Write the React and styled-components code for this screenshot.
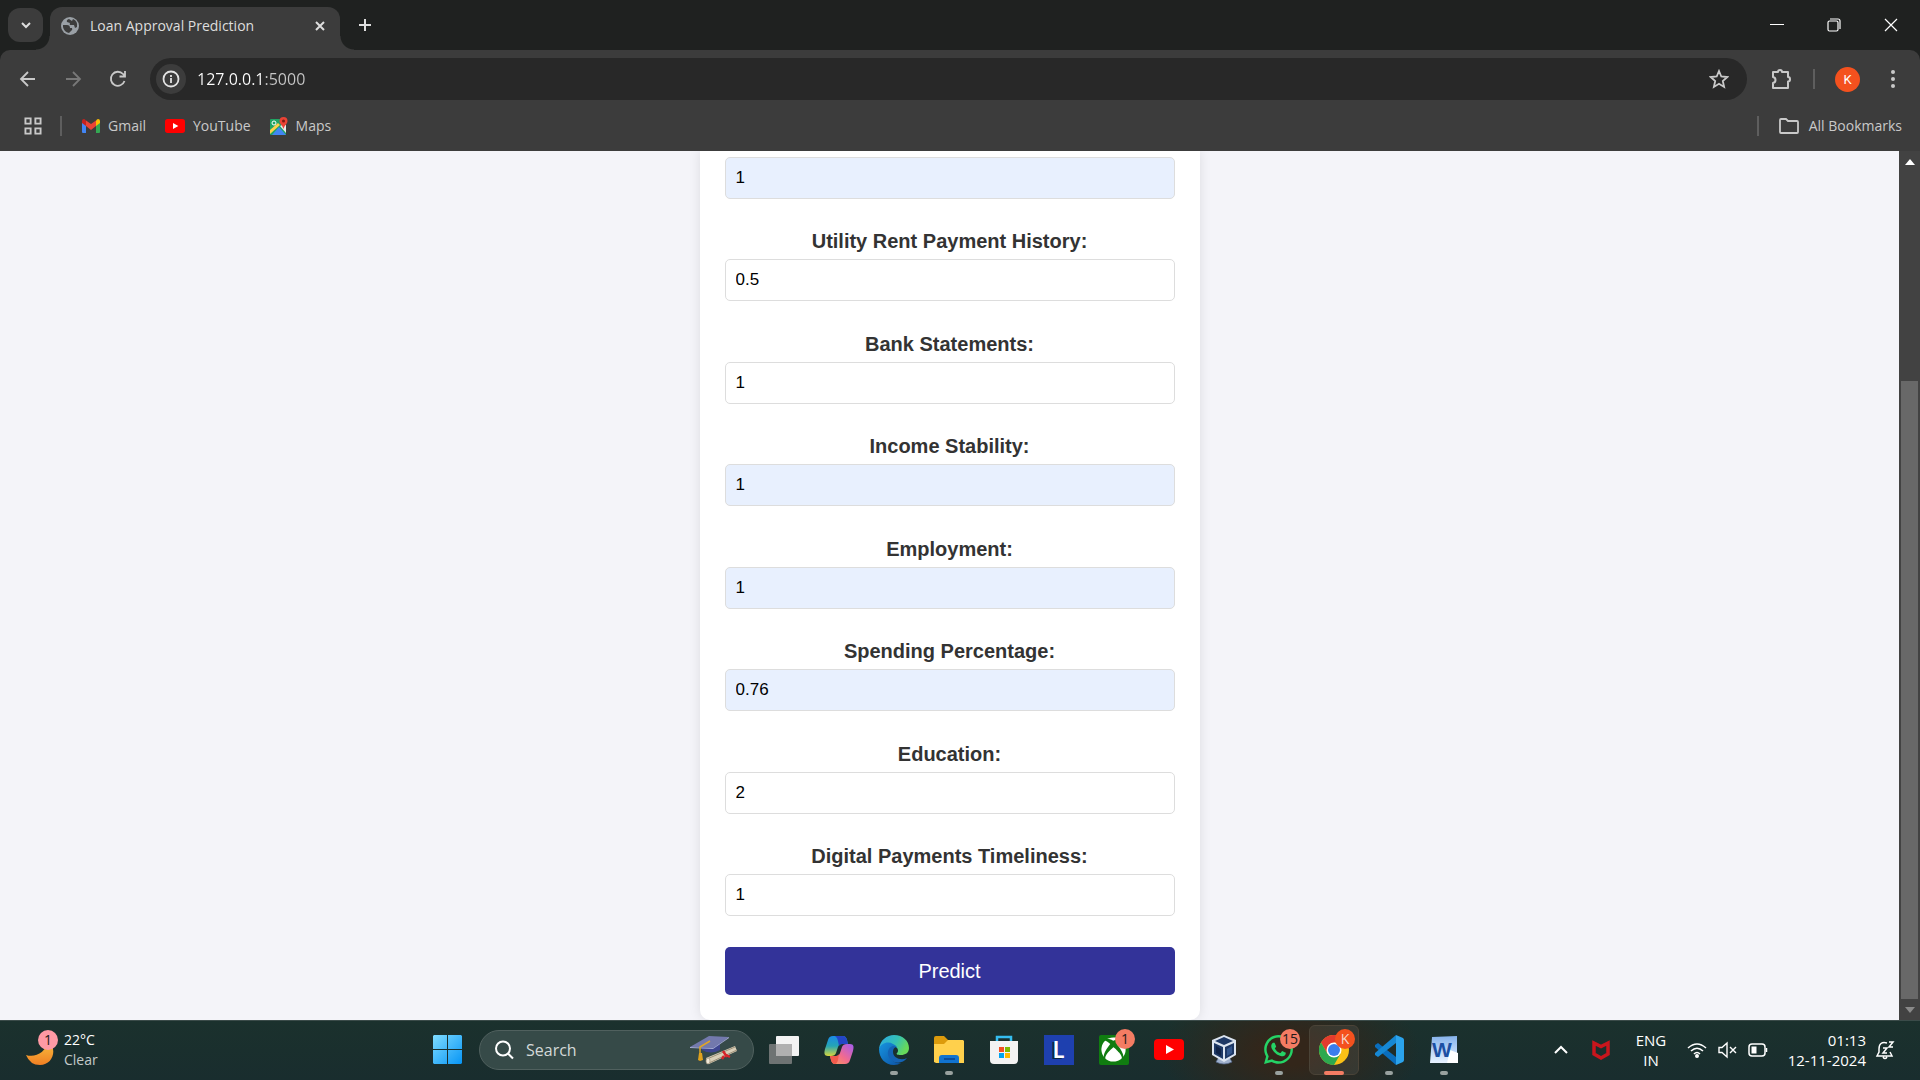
import React from "react";
import styled, { createGlobalStyle } from "styled-components";
import { FaXbox, FaWhatsapp } from "react-icons/fa6";

const ui = '"Open Sans", "Noto Sans", sans-serif';
const arial = '"Liberation Sans", Arial, sans-serif';

const GlobalStyle = createGlobalStyle`
  * { box-sizing: border-box; }
  body { margin: 0; font-family: ${ui}; background: #3c3c3c; }
  button { border: 0; padding: 0; background: none; color: inherit; font: inherit; }
  input { font: inherit; outline: none; }
  a { color: inherit; text-decoration: none; }
  svg { display: block; flex: none; }
`;

const Screen = styled.div`
  display: flex;
  flex-direction: column;
  height: 100vh;
  overflow: hidden;
`;

/* ---------- browser chrome ---------- */

const TabStrip = styled.header`
  display: flex;
  align-items: flex-start;
  flex: none;
  height: 50px;
  padding-left: 8px;
  background: #1f2120;
  color: #dedede;
`;

const TabSearch = styled.button`
  display: grid;
  place-items: center;
  width: 35px;
  height: 34px;
  margin-top: 8px;
  border-radius: 12px;
  background: #3c3c3c;
`;

const Tab = styled.div`
  position: relative;
  display: flex;
  align-items: center;
  width: 290px;
  height: 43px;
  margin: 7px 0 0 7px;
  padding: 0 12px 6px 11px;
  border-radius: 12px 12px 0 0;
  background: #3c3c3c;
  font-size: 14px;

  &::before,
  &::after {
    content: "";
    position: absolute;
    bottom: 0;
    width: 14px;
    height: 14px;
  }
  &::before {
    right: 100%;
    background: radial-gradient(circle at 0 0, transparent 13px, #3c3c3c 14px);
  }
  &::after {
    left: 100%;
    background: radial-gradient(circle at 100% 0, transparent 13px, #3c3c3c 14px);
  }
`;

const TabTitle = styled.span`
  flex: 1;
  margin-left: 11px;
  white-space: nowrap;
`;

const SmallButton = styled.button`
  display: grid;
  place-items: center;
  width: 16px;
  height: 24px;
`;

const NewTab = styled.button`
  display: grid;
  place-items: center;
  width: 50px;
  height: 50px;
`;

const WindowControls = styled.div`
  display: flex;
  margin-left: auto;
  padding-right: 1px;
`;

const WindowButton = styled.button`
  display: grid;
  place-items: center;
  width: 57px;
  height: 50px;
  color: #fff;
`;

const ToolbarBack = styled.div`
  flex: none;
  background: #1f2120;
`;

const Toolbar = styled.div`
  display: flex;
  align-items: center;
  height: 58px;
  padding: 0 5px;
  border-radius: 10px 10px 0 0;
  background: #3c3c3c;
  color: #c9c9c9;
`;

const ToolButton = styled.button`
  display: grid;
  place-items: center;
  width: 45px;
  height: 42px;
  color: ${(p) => (p.$dim ? "#787878" : "inherit")};
`;

const Omnibox = styled.div`
  display: flex;
  align-items: center;
  flex: 1;
  height: 42px;
  margin: 0 11px 0 10px;
  padding: 0 22px 0 6px;
  border-radius: 21px;
  background: #282828;
`;

const SiteInfo = styled.button`
  display: grid;
  place-items: center;
  width: 30px;
  height: 30px;
  border-radius: 50%;
  background: #3c3c3c;
  color: #e3e3e3;
`;

const Address = styled.input`
  flex: 1;
  min-width: 0;
  margin-left: 11px;
  padding: 0;
  border: 0;
  background: linear-gradient(90deg, #fff 66px, #c7c7c7 66px);
  background-clip: text;
  color: transparent;
  font-size: 16px;
  line-height: 24px;
`;

const Rule = styled.span`
  width: 2px;
  height: 20px;
  background: #5e5e5e;
  margin: 0 ${(p) => p.$gap}px;
`;

const Avatar = styled.span`
  display: grid;
  place-items: center;
  width: 25px;
  height: 25px;
  border-radius: 50%;
  background: #f4511e;
  color: #fff;
  font: 13px/25px Roboto, sans-serif;
`;

const Bookmarks = styled.nav`
  display: flex;
  align-items: center;
  flex: none;
  height: 43px;
  padding: 0 18px 8px 24px;
  background: #3c3c3c;
  color: #c9c9c9;
  font-size: 14px;
`;

const BookmarkList = styled.div`
  display: flex;
  flex: 1;
  gap: 19px;
`;

const Bookmark = styled.a`
  display: flex;
  align-items: center;
  gap: 8px;
  white-space: nowrap;
`;

const AllBookmarks = styled.button`
  display: flex;
  align-items: center;
  gap: 10px;
  white-space: nowrap;
`;

/* ---------- web page ---------- */

const Viewport = styled.div`
  display: flex;
  flex: 1;
  min-height: 0;
`;

const Page = styled.main`
  display: flex;
  justify-content: center;
  flex: 1;
  overflow: hidden;
  background: #f4f4f9;
  font-family: ${arial};
`;

const Card = styled.form`
  display: flex;
  flex-direction: column;
  width: 500px;
  padding: 6px 25px 25px;
  border-radius: 0 0 10px 10px;
  background: #fff;
  box-shadow: 0 0 12px rgba(0, 0, 0, 0.1);
`;

const Fields = styled.div`
  display: flex;
  flex-direction: column;
  justify-content: space-between;
  flex: 1;
  margin-bottom: 31px;
`;

const Field = styled.div`
  display: flex;
  flex-direction: column;
  gap: 6px;
`;

const Label = styled.label`
  color: #333;
  font-size: 20px;
  font-weight: bold;
  line-height: 23px;
  text-align: center;
`;

const TextInput = styled.input`
  width: 100%;
  height: 42px;
  padding: 0 10px;
  border: 1px solid #ddd;
  border-radius: 5px;
  background: ${(p) => (p.$filled ? "#e8f0fe" : "#fff")};
  color: #000;
  font-size: 17px;
`;

const Submit = styled.button`
  height: 48px;
  border-radius: 5px;
  background: #333399;
  color: #fff;
  font-size: 20px;
`;

const Scrollbar = styled.div`
  display: flex;
  flex-direction: column;
  width: 21px;
  background: #424242;
`;

const ScrollArrow = styled.button`
  display: grid;
  place-items: center;
  height: 21px;
  color: ${(p) => p.$color};
`;

const ScrollTrack = styled.div`
  flex: 209;
`;

const ScrollThumb = styled.div`
  flex: 618;
  margin: 0 2px;
  background: #686868;
`;

/* ---------- taskbar ---------- */

const Taskbar = styled.footer`
  display: flex;
  align-items: center;
  flex: none;
  height: 60px;
  padding-bottom: 2px;
  border-top: 1px solid #3b4b49;
  background:
    radial-gradient(ellipse 130px 70px at 1290px 30px, #33261a 20%, transparent 100%),
    linear-gradient(#1b312d, #192d2e);
  color: #fff;
  font-size: 14px;
  line-height: 20px;
`;

const Weather = styled.button`
  display: flex;
  align-items: center;
  flex: 0 0 420px;
  padding-left: 26px;
  text-align: left;
`;

const WeatherIcon = styled.span`
  position: relative;
  width: 38px;
  height: 40px;
`;

const WeatherText = styled.span`
  display: flex;
  flex-direction: column;
  small { font-size: 14px; color: #c3cac9; }
`;

const Badge = styled.span`
  position: absolute;
  top: ${(p) => p.$top}px;
  right: 6px;
  width: 20px;
  height: 20px;
  border-radius: 50%;
  background: ${(p) => p.$bg || "#f47c63"};
  color: ${(p) => p.$fg || "#24191a"};
  font-size: 14px;
  line-height: 20px;
  text-align: center;
`;

const TaskButton = styled.button`
  position: relative;
  display: grid;
  place-items: center;
  width: 55px;
  height: 50px;

  &::after {
    content: "";
    position: absolute;
    left: 50%;
    bottom: 0;
    width: ${(p) => (p.$state === "active" ? 20 : 8)}px;
    height: 4px;
    border-radius: 2px;
    transform: translateX(-50%);
    background: ${(p) => (p.$state === "active" ? "#f47c63" : p.$state === "open" ? "#99a19f" : "transparent")};
  }
`;

const ActiveTile = styled.span`
  display: grid;
  place-items: center;
  width: 50px;
  height: 50px;
  border: 1px solid #4a4337;
  border-radius: 6px;
  background: rgba(255, 255, 255, 0.07);
`;

const SearchBox = styled.label`
  display: flex;
  align-items: center;
  width: 275px;
  height: 40px;
  margin: 0 2px 0 4px;
  padding: 0 15px 0 14px;
  border: 1px solid #50605e;
  border-radius: 20px;
  background: #364a48;
  input {
    flex: 1;
    min-width: 0;
    margin-left: 12px;
    padding: 0;
    border: 0;
    background: none;
    color: #fff;
    font-size: 16px;
  }
  input::placeholder { color: #d3d9d8; opacity: 1; }
`;

const Tray = styled.div`
  display: flex;
  align-items: center;
  margin-left: auto;
  padding-right: 16px;
  font-size: 15px;
`;

const TrayButton = styled.button`
  display: grid;
  place-items: center;
  width: ${(p) => p.$w}px;
  height: 40px;
`;

const Lines = styled.button`
  display: flex;
  flex-direction: column;
  align-items: ${(p) => p.$align};
  width: ${(p) => p.$w}px;
  white-space: nowrap;
`;

/* ---------- icons ---------- */

const Line = ({ s = 20, w = 2, vb = 20, children }) => (
  <svg width={s} height={s} viewBox={`0 0 ${vb} ${vb}`} fill="none" stroke="currentColor" strokeWidth={w}>
    {children}
  </svg>
);

const Globe = () => (
  <svg width="18" height="18" viewBox="0 0 18 18">
    <circle cx="9" cy="9" r="9" fill="#9aa0a6" />
    <path d="M2 8h4q3 0 3 3h2q1 2-1 3l-2 2q-5-1-6-6z" fill="#3c3c3c" />
    <path d="M8 2q-3 1-2 3l3 1q-1 2 1 2h3l1 3 2-1q1-6-4-8l-1 2z" fill="#3c3c3c" />
  </svg>
);

const Gmail = () => (
  <svg width="18" height="14" viewBox="0 0 18 14">
    <path d="M0 2v11q0 1 1 1h3V5z" fill="#4285f4" />
    <path d="M18 2v11q0 1-1 1h-3V5z" fill="#34a853" />
    <path d="M14 1.500V7l4-3V2Q18 0 16 0q-1 0-2 1.500z" fill="#fbbc04" />
    <path d="M4 1.500V7L0 4V2Q0 0 2 0q1 0 2 1.500z" fill="#c5221f" />
    <path d="M4 1.500L9 5l5-3.500V7L9 11 4 7z" fill="#ea4335" />
  </svg>
);

const YouTube = ({ w, h }) => (
  <svg width={w} height={h} viewBox="0 0 30 21" preserveAspectRatio="none">
    <rect width="30" height="21" rx="4" fill="#f00" />
    <path d="M12 6l8 4.500-8 4.500z" fill="#fff" />
  </svg>
);

const Maps = () => (
  <svg width="18" height="18" viewBox="0 0 18 18">
    <rect y="2" width="16" height="16" rx="1" fill="#1fa463" />
    <path d="M10 8L0 17v-4l8-7z" fill="#ffd04b" />
    <path d="M10 9l6 7V8h-4z" fill="#e8eaed" />
    <path d="M9 10l7 8H2z" fill="#4285f4" />
    <circle cx="4" cy="6" r="2" fill="none" stroke="#fff" />
    <path d="M13.500 0a4 4 0 014 4c0 3-3 4-4 8-1-4-4-5-4-8a4 4 0 014-4z" fill="#ea4335" />
    <circle cx="13.500" cy="4" r="1.500" fill="#7b1b12" />
  </svg>
);

const Moon = () => (
  <svg width="28" height="40" viewBox="0 0 28 40">
    <defs><linearGradient id="moon" x2="0" y2="1"><stop stopColor="#f9c440" /><stop offset="1" stopColor="#f07f23" /></linearGradient></defs>
    <path d="M0 25c9 3 20-2 22-15 10 9 5 25-8 25Q4 35 0 25z" fill="url(#moon)" />
  </svg>
);

const Windows = () => (
  <svg width="29" height="29" viewBox="0 0 29 29">
    <defs><linearGradient id="win" x2="1" y2="1"><stop stopColor="#7fdcff" /><stop offset="1" stopColor="#0795f5" /></linearGradient></defs>
    <path d="M1 0h13v14H0V1zM15 0h13l1 1v13H15zM0 15h14v14H1l-1-1zM15 15h14v13l-1 1H15z" fill="url(#win)" />
  </svg>
);

const GradCap = () => (
  <svg width="48" height="30" viewBox="0 0 48 30">
    <path d="M12 8v7q9 5 18 0V6z" fill="#3d4590" />
    <path d="M0 12L19 1l20 1-16 11z" fill="#7379ad" />
    <path d="M0 12l23 1 16-11v1L23 14 0 13z" fill="#a5abd3" />
    <path d="M20 6L10 12v8" fill="none" stroke="#e1a526" strokeWidth="1.500" />
    <path d="M9 18h3l1 7-3 1-2-1z" fill="#e0a21d" />
    <path d="M16 23l29-12 2 5-28 13z" fill="#d9cfb8" />
    <path d="M17 24l28-12M19 28l28-13" stroke="#9d9079" strokeWidth="1" />
    <ellipse cx="18" cy="26" rx="2" ry="3" fill="#f1ead9" stroke="#a0937b" strokeWidth=".7" />
    <path d="M33 16l4 6M34 21l-2 3M36 20l4 2" stroke="#d8232a" strokeWidth="2.500" />
  </svg>
);

const TaskView = () => (
  <svg width="30" height="28" viewBox="0 0 30 28">
    <rect x="7" width="23" height="20" rx="1" fill="#f3f3f3" />
    <rect y="8" width="23" height="20" rx="1" fill="#6e7373" />
    <path d="M7 8h16v12H7z" fill="#b0b0b0" />
  </svg>
);

const Copilot = () => (
  <svg width="30" height="28" viewBox="0 0 30 28">
    <defs>
      <linearGradient id="cpa" x2="0" y2="1"><stop stopColor="#1b8be8" /><stop offset=".5" stopColor="#25a5b5" /><stop offset="1" stopColor="#d6d63c" /></linearGradient>
      <linearGradient id="cpb" x1="1" x2="0" y2="1"><stop stopColor="#a35cf0" /><stop offset=".55" stopColor="#f26b8e" /><stop offset="1" stopColor="#fba057" /></linearGradient>
    </defs>
    <path d="M7 20H4c-4 0-4-3-3-7L4 4q1-4 5-4h10q3 0 4 4l1 4h-6q-3 0-4 3l-2 6q-1 3-5 3z" fill="url(#cpa)" />
    <path d="M14 0h5q3 0 4 4l1 4h-6q-2 0-3 2l-1-5q0-3-3-5z" fill="#2446c6" />
    <path d="M23 8h3c4 0 4 3 3 7l-3 9q-1 4-5 4H11q-3 0-4-4l-1-4h6q3 0 4-3l2-6q1-3 5-3z" fill="url(#cpb)" />
    <path d="M6 20h6q2 0 3-2l-1 6q-1 4-3 4-3 0-4-4z" fill="#f25b4d" />
  </svg>
);

const Edge = () => (
  <svg width="30" height="30" viewBox="0 0 30 30">
    <defs>
      <linearGradient id="eg1" x2="1" y2=".4"><stop stopColor="#2aa7e8" /><stop offset=".6" stopColor="#35c1b4" /><stop offset="1" stopColor="#67d95a" /></linearGradient>
      <linearGradient id="eg2" x2="1" y2="1"><stop stopColor="#1794e0" /><stop offset="1" stopColor="#0c52a4" /></linearGradient>
    </defs>
    <path d="M0 14C1 5 8 0 15 0c9 0 15 6 15 13 0 5-4 7-8 7-4 0-5-1-4-2 2-2 1-6-3-7-5-2-12-2-15 3z" fill="url(#eg1)" />
    <path d="M0 14c2-6 9-8 14-5 3 1 4 3 4 4-4-3-8 0-8 5 0 6 5 11 12 10-2 1-4 2-7 2C6 30 0 23 0 14z" fill="url(#eg2)" />
    <path d="M14 11c-5 1-7 8-3 13 4 5 13 5 17-1-6 3-14 0-14-6 0-3 1-4 3-5z" fill="#1463b5" />
  </svg>
);

const Folder = () => (
  <svg width="30" height="27" viewBox="0 0 30 27">
    <path d="M0 2q0-2 2-2h8l4 4h15v10H0z" fill="#dc9b0c" />
    <path d="M0 8h10l4-4h15l1 1v22H2l-2-1z" fill="#ffd04c" />
    <path d="M5 27v-5q0-3 3-3h14q3 0 3 3v5z" fill="#1173cf" />
    <path d="M10 22h11v2H10z" fill="#0a4d9c" />
  </svg>
);

const Store = () => (
  <svg width="30" height="30" viewBox="0 0 30 30">
    <path d="M8 7V2h14v5" fill="none" stroke="#35bdf0" strokeWidth="2.500" />
    <path d="M1 6h28v19q0 4-4 4H5q-4 0-4-4z" fill="#f3f3f3" />
    <path d="M10 12h5v5h-5z" fill="#f25022" /><path d="M16 12h5v5h-5z" fill="#7fba00" />
    <path d="M10 18h5v5h-5z" fill="#00a4ef" /><path d="M16 18h5v5h-5z" fill="#ffb900" />
  </svg>
);

const LTile = styled.span`
  width: 30px;
  height: 30px;
  background: #1e40af;
  color: #fff;
  font: bold 22px/29px Lato, sans-serif;
  text-shadow: -2px 1px 0 #0c2746;
`;

const XboxTile = styled.span`
  display: grid;
  place-items: center;
  width: 30px;
  height: 30px;
  border-radius: 2px;
  background: #107c10;
`;

const VBox = () => (
  <svg width="26" height="30" viewBox="0 0 26 30">
    <path d="M8 22h10l3 5q-8 4-16 0z" fill="#9fb0cc" stroke="#546a8f" strokeWidth=".7" />
    <path d="M13 0l12 5v15l-12 7-12-7V5z" fill="#dbe4f0" />
    <path d="M13 2l9 4-9 4-9-4zM3 8l9 4v12l-9-5zM23 8l-9 4v12l9-5z" fill="#1d3865" />
    <path d="M5 11l5 3v7l-5-3z" fill="#0f2348" /><path d="M21 11l-5 3v7l5-3z" fill="#32558c" />
  </svg>
);

const Chrome = () => (
  <svg width="30" height="30" viewBox="0 0 30 30">
    <circle cx="15" cy="15" r="15" fill="#fbc116" />
    <path d="M2 7.500A15 15 0 0128 7.500H15L8.500 18.800z" fill="#e33b2e" />
    <path d="M2 7.500A15 15 0 0015 30l6.500-11.300L8.500 18.800z" fill="#2da94f" />
    <circle cx="15" cy="15" r="7.500" fill="#fff" /><circle cx="15" cy="15" r="6" fill="#3b7ded" />
  </svg>
);

const VSCode = () => (
  <svg width="30" height="30" viewBox="0 0 30 30">
    <path d="M1 10l3-2 18 14v8L1 12z" fill="#0a6ebd" />
    <path d="M1 20l3 2L22 8V0L1 18z" fill="#1688d4" />
    <path d="M22 0l7 3q1 1 1 2v20q0 1-1 2l-7 3z" fill="#2ba3ec" />
  </svg>
);

const Word = () => (
  <svg width="28" height="28" viewBox="0 0 28 28">
    <defs><linearGradient id="wd" x2="0" y2="1"><stop stopColor="#86b3ec" /><stop offset="1" stopColor="#e8f2ff" /></linearGradient></defs>
    <path d="M2 1L27 0v27H0z" fill="url(#wd)" />
    <path d="M20 14l8 3v10H17z" fill="#fff" />
    <text x="2" y="21" fontFamily="Liberation Sans, sans-serif" fontWeight="bold" fontSize="21" fill="#1c4fa3">W</text>
  </svg>
);

const fields = [
  { id: "previous", value: "1", filled: true },
  { id: "utility", label: "Utility Rent Payment History:", value: "0.5" },
  { id: "bank", label: "Bank Statements:", value: "1" },
  { id: "income", label: "Income Stability:", value: "1", filled: true },
  { id: "employment", label: "Employment:", value: "1", filled: true },
  { id: "spending", label: "Spending Percentage:", value: "0.76", filled: true },
  { id: "education", label: "Education:", value: "2" },
  { id: "digital", label: "Digital Payments Timeliness:", value: "1" },
];

function Browser() {
  return (
    <>
      <TabStrip>
        <TabSearch aria-label="Search tabs"><Line s={12} vb={12}><path d="M2 4l4 4 4-4" /></Line></TabSearch>
        <Tab>
          <Globe />
          <TabTitle>Loan Approval Prediction</TabTitle>
          <SmallButton aria-label="Close tab"><Line s={12} vb={12}><path d="M2 2l8 8M10 2l-8 8" /></Line></SmallButton>
        </Tab>
        <NewTab aria-label="New tab"><Line s={14} vb={14}><path d="M7 1v12M1 7h12" /></Line></NewTab>
        <WindowControls>
          <WindowButton aria-label="Minimize"><Line s={14} vb={14} w={1}><path d="M0 6.500h14" /></Line></WindowButton>
          <WindowButton aria-label="Restore">
            <Line s={14} vb={14} w={1.2}><rect x="1" y="3" width="10" height="10" rx="1.500" /><path d="M3 1h8q2 0 2 2v8" /></Line>
          </WindowButton>
          <WindowButton aria-label="Close"><Line s={14} vb={14} w={1.2}><path d="M1 1l12 12M13 1L1 13" /></Line></WindowButton>
        </WindowControls>
      </TabStrip>
      <ToolbarBack>
        <Toolbar>
          <ToolButton aria-label="Back"><Line w={1.8}><path d="M17 10H4M10 3l-7 7 7 7" /></Line></ToolButton>
          <ToolButton aria-label="Forward" $dim><Line w={1.8}><path d="M3 10h13M10 3l7 7-7 7" /></Line></ToolButton>
          <ToolButton aria-label="Reload"><Line w={1.8}><path d="M16.500 12A7 7 0 1115 5l2 2M17 2v5.500h-5.500" /></Line></ToolButton>
          <Omnibox>
            <SiteInfo aria-label="Site information">
              <Line s={18} vb={18} w={1.8}><circle cx="9" cy="9" r="7.500" /><path d="M9 8v5M9 5v2" /></Line>
            </SiteInfo>
            <Address aria-label="Address" defaultValue="127.0.0.1:5000" />
            <SmallButton aria-label="Bookmark this page">
              <Line s={20} w={1.8}><path d="M10 2l2.300 5.500 6 .5-4.500 4 1.300 5.900L10 14.800 4.900 17.900 6.200 12 1.700 8l6-.5z" /></Line>
            </SmallButton>
          </Omnibox>
          <ToolButton aria-label="Extensions">
            <Line s={22} vb={22}><path d="M3 4h5q0-2 2-2t2 2h6v5q2 0 2 2.200t-2 2.200V20H3v-5q2.500-.5 2.500-3T3 9z" strokeLinejoin="round" /></Line>
          </ToolButton>
          <Rule $gap={10} />
          <ToolButton aria-label="Profile"><Avatar>K</Avatar></ToolButton>
          <ToolButton aria-label="Menu">
            <svg width="4" height="18" viewBox="0 0 4 18" fill="currentColor"><circle cx="2" cy="2" r="2" /><circle cx="2" cy="9" r="2" /><circle cx="2" cy="16" r="2" /></svg>
          </ToolButton>
        </Toolbar>
      </ToolbarBack>
      <Bookmarks>
        <SmallButton aria-label="Apps">
          <Line s={18} vb={19} w={2}><path d="M1.500 1.500h5.500v5.500H1.500zM12 1.500h5.500v5.500H12zM1.500 12h5.500v5.500H1.500zM12 12h5.500v5.500H12z" /></Line>
        </SmallButton>
        <Rule $gap={20} />
        <BookmarkList>
          <Bookmark href="#gmail"><Gmail />Gmail</Bookmark>
          <Bookmark href="#youtube"><YouTube w={20} h={14} />YouTube</Bookmark>
          <Bookmark href="#maps"><Maps />Maps</Bookmark>
        </BookmarkList>
        <Rule $gap={20} />
        <AllBookmarks>
          <Line s={20} w={1.8}><path d="M1 4q0-1 1-1h5l2 2h9q1 0 1 1v10q0 1-1 1H2q-1 0-1-1z" /></Line>
          All Bookmarks
        </AllBookmarks>
      </Bookmarks>
    </>
  );
}

function LoanForm() {
  return (
    <Card onSubmit={(e) => e.preventDefault()}>
      <Fields>
        {fields.map((f) => (
          <Field key={f.id}>
            {f.label && <Label htmlFor={f.id}>{f.label}</Label>}
            <TextInput id={f.id} defaultValue={f.value} $filled={f.filled} aria-label={f.label ? undefined : "Value"} />
          </Field>
        ))}
      </Fields>
      <Submit type="submit">Predict</Submit>
    </Card>
  );
}

function SystemBar() {
  return (
    <Taskbar>
      <Weather>
        <WeatherIcon><Moon /><Badge $top={0} $bg="#ff99a4">1</Badge></WeatherIcon>
        <WeatherText><span>22°C</span><small>Clear</small></WeatherText>
      </Weather>
      <TaskButton aria-label="Start"><Windows /></TaskButton>
      <SearchBox>
        <Line s={20}><circle cx="9" cy="8.500" r="7" /><path d="M14 13.500l5 5" /></Line>
        <input aria-label="Search" placeholder="Search" />
        <GradCap />
      </SearchBox>
      <TaskButton aria-label="Task view"><TaskView /></TaskButton>
      <TaskButton aria-label="Copilot"><Copilot /></TaskButton>
      <TaskButton aria-label="Edge" $state="open"><Edge /></TaskButton>
      <TaskButton aria-label="File Explorer" $state="open"><Folder /></TaskButton>
      <TaskButton aria-label="Store"><Store /></TaskButton>
      <TaskButton><LTile>L</LTile></TaskButton>
      <TaskButton aria-label="Xbox">
        <XboxTile><FaXbox size={25} /></XboxTile>
        <Badge $top={4}>1</Badge>
      </TaskButton>
      <TaskButton aria-label="YouTube"><YouTube w={30} h={21} /></TaskButton>
      <TaskButton aria-label="VirtualBox"><VBox /></TaskButton>
      <TaskButton aria-label="WhatsApp" $state="open">
        <FaWhatsapp size={33} color="#25d366" />
        <Badge $top={4}>15</Badge>
      </TaskButton>
      <TaskButton aria-label="Chrome" $state="active">
        <ActiveTile><Chrome /></ActiveTile>
        <Badge $top={4} $bg="#f4511e" $fg="#f6d9cf">K</Badge>
      </TaskButton>
      <TaskButton aria-label="VS Code" $state="open"><VSCode /></TaskButton>
      <TaskButton aria-label="Word" $state="open"><Word /></TaskButton>
      <Tray>
        <TrayButton $w={40} aria-label="Hidden icons"><Line s={14} vb={14}><path d="M1 10l6-6 6 6" /></Line></TrayButton>
        <TrayButton $w={40} aria-label="McAfee">
          <svg width="18" height="20" viewBox="0 0 18 20"><path d="M2 3l7 3.500L16 3v11l-7 4-7-4z" fill="none" stroke="#c8161d" strokeWidth="3.500" /></svg>
        </TrayButton>
        <Lines $align="center" $w={60}><span>ENG</span><span>IN</span></Lines>
        <TrayButton $w={32} aria-label="Wi-Fi">
          <Line s={20} w={1.6}><path d="M1 8q9-8 18 0M4 11q6-5.500 12 0M7 14q3-3 6 0" /><circle cx="10" cy="16" r="1.200" fill="currentColor" /></Line>
        </TrayButton>
        <TrayButton $w={30} aria-label="Volume muted">
          <Line s={20} w={1.4}><path d="M1 7.500h3L9 3v14l-5-4.500H1zM12 7l6 6M18 7l-6 6" /></Line>
        </TrayButton>
        <TrayButton $w={30} aria-label="Battery">
          <Line s={20} w={1.5}><rect x="1" y="4" width="16" height="12" rx="3" /><path d="M18.500 8v4" /><path d="M3.500 6.500h5v7h-5z" fill="currentColor" stroke="none" /></Line>
        </TrayButton>
        <Lines $align="flex-end" $w={93}><span>01:13</span><span>12-11-2024</span></Lines>
        <TrayButton $w={38} aria-label="Notifications">
          <Line s={20} w={1.5}><path d="M12 3Q4 1 4 9v3l-2 4h15l-2-4M8 17q2 3 4 0M8 8h4l-4 5h4M14 2h4l-4 5h4" /></Line>
        </TrayButton>
      </Tray>
    </Taskbar>
  );
}

export default function App() {
  return (
    <Screen>
      <GlobalStyle />
      <Browser />
      <Viewport>
        <Page><LoanForm /></Page>
        <Scrollbar>
          <ScrollArrow $color="#fff" aria-label="Scroll up"><svg width="10" height="6" viewBox="0 0 10 6"><path d="M0 6l5-6 5 6z" fill="currentColor" /></svg></ScrollArrow>
          <ScrollTrack />
          <ScrollThumb />
          <ScrollArrow $color="#8a8a8a" aria-label="Scroll down"><svg width="10" height="6" viewBox="0 0 10 6"><path d="M0 0l5 6 5-6z" fill="currentColor" /></svg></ScrollArrow>
        </Scrollbar>
      </Viewport>
      <SystemBar />
    </Screen>
  );
}
